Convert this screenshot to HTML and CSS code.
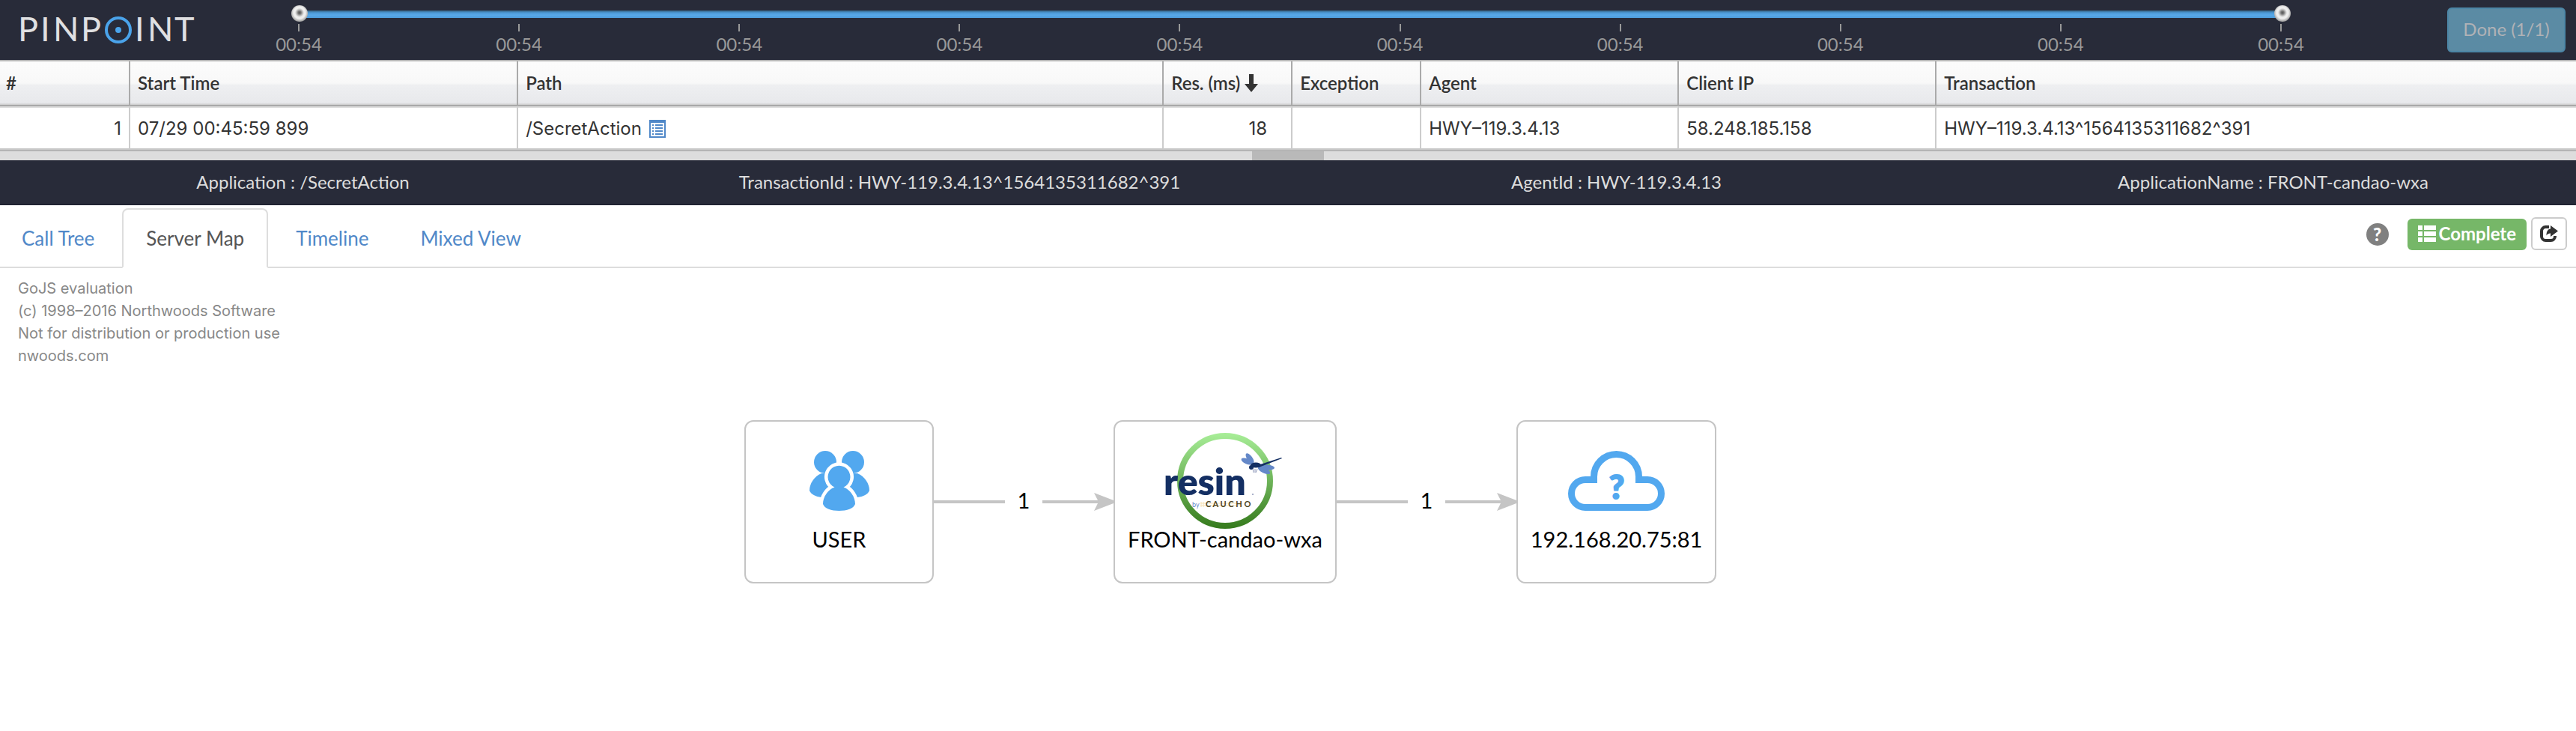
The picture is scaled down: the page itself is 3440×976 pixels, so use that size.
FILE: index.html
```html
<!DOCTYPE html>
<html lang="en">
<head>
<meta charset="utf-8">
<title>Pinpoint - Transaction</title>
<link rel="stylesheet" href="styles.css">
</head>
<body>
<header class="topbar">
  <svg class="brand" viewBox="20 8 244 60" role="img" aria-label="PINPOINT">
    <text class="brand-text" y="55" x="24 54 71 108">PINP</text>
    <circle class="brand-ring" cx="158" cy="40" r="16"/>
    <circle class="brand-dot" cx="158" cy="40" r="4"/>
    <text class="brand-text" y="55" x="180 197 233">INT</text>
  </svg>
  <div class="timeline">
    <div class="slider">
      <div class="slider-track"></div>
      <input class="slider-input" type="range" min="0" max="100" value="0" aria-label="Range start">
      <input class="slider-input" type="range" min="0" max="100" value="100" aria-label="Range end">
    </div>
    <ol class="ticks">
      <li class="tick">00:54</li>
      <li class="tick">00:54</li>
      <li class="tick">00:54</li>
      <li class="tick">00:54</li>
      <li class="tick">00:54</li>
      <li class="tick">00:54</li>
      <li class="tick">00:54</li>
      <li class="tick">00:54</li>
      <li class="tick">00:54</li>
      <li class="tick">00:54</li>
    </ol>
  </div>
  <button class="done" type="button" disabled>Done (1/1)</button>
</header>

<table class="grid">
  <colgroup>
    <col class="col-num"><col class="col-time"><col class="col-path"><col class="col-flag"><col class="col-flag"><col class="col-id"><col class="col-id"><col>
  </colgroup>
  <thead>
    <tr>
      <th scope="col">#</th>
      <th scope="col">Start Time</th>
      <th scope="col">Path</th>
      <th scope="col">Res. (ms)<svg class="sort" viewBox="0 0 18 24" aria-hidden="true"><path d="M6 0h6v13h6l-9 11L0 13h6z"/></svg></th>
      <th scope="col">Exception</th>
      <th scope="col">Agent</th>
      <th scope="col">Client IP</th>
      <th scope="col">Transaction</th>
    </tr>
  </thead>
  <tbody>
    <tr>
      <td class="right">1</td>
      <td>07/29 00:45:59 899</td>
      <td>/SecretAction<svg class="detail" viewBox="0 0 22 24" aria-hidden="true"><path fill-rule="evenodd" d="M0 0h22v24H0zM2 4v18h18V4z"/><path d="M4 6h2v2H4zm4 0h10v2H8zM4 10h2v2H4zm4 0h10v2H8zM4 14h2v2H4zm4 0h10v2H8zM4 18h2v2H4zm4 0h10v2H8z"/></svg></td>
      <td class="right res">18</td>
      <td></td>
      <td>HWY–119.3.4.13</td>
      <td>58.248.185.158</td>
      <td>HWY–119.3.4.13^1564135311682^391</td>
    </tr>
  </tbody>
</table>
<div class="splitter"><div class="splitter-grip"></div></div>

<section class="info">
  <ul class="info-list">
    <li>Application : /SecretAction</li>
    <li>TransactionId : HWY-119.3.4.13^1564135311682^391</li>
    <li>AgentId : HWY-119.3.4.13</li>
    <li>ApplicationName : FRONT-candao-wxa</li>
  </ul>
</section>

<nav class="tabbar">
  <ul class="tabs">
    <li><a class="tab" href="#calltree">Call Tree</a></li>
    <li><a class="tab active" href="#servermap" aria-current="page">Server Map</a></li>
    <li><a class="tab" href="#timeline">Timeline</a></li>
    <li><a class="tab" href="#mixed">Mixed View</a></li>
  </ul>
  <div class="tools">
    <button class="help" type="button">?</button>
    <button class="complete" type="button"><svg class="list" viewBox="0 0 24 22" aria-hidden="true"><path d="M0 0h6v6H0zm8 0h16v6H8zM0 8h6v6H0zm8 0h16v6H8zM0 16h6v6H0zm8 0h16v6H8z"/></svg>Complete</button>
    <button class="share" type="button" aria-label="Open in new window"><svg class="share-icon" viewBox="0 0 24 22" aria-hidden="true"><path class="share-frame" d="M12 2H7.500a5.500 5.500 0 0 0-5.500 5.500v7A5.500 5.500 0 0 0 7.500 20h7a5.500 5.500 0 0 0 5.500-5.500V14"/><path d="M14 0l10 7.500L14 15v-4.500c-2.500 0-4 .8-5.500 3C8.500 8 10.500 5 14 4.500z"/></svg></button>
  </div>
</nav>

<main class="canvas" id="servermap">
  <p class="watermark">GoJS evaluation<br>(c) 1998–2016 Northwoods Software<br>Not for distribution or production use<br>nwoods.com</p>
  <div class="map">
    <div class="node">
      <div class="node-art"><svg class="users" viewBox="0 0 80 80" aria-hidden="true">
        <g><circle cx="21" cy="15" r="15"/><path d="M16 30C6 34 0 44 0 53c2 5 8 8 16 9L30 50V30z"/></g>
        <g><circle cx="58" cy="15" r="15"/><path d="M64 30c10 4 16 14 16 23-2 5-8 8-16 9L50 50V30z"/></g>
        <path class="users-gap" d="M33.500 48.500a15 15 0 1 1 12 0C55 52 61 62 61 71c-2 6-11 9-21.500 9S20 77 18 71c0-9 6-19 15.500-22.500z"/>
        <path d="M33.500 48.500a15 15 0 1 1 12 0C55 52 61 62 61 71c-2 6-11 9-21.500 9S20 77 18 71c0-9 6-19 15.500-22.500z"/>
      </svg></div>
      <div class="node-label">USER</div>
    </div>
    <div class="link">
      <div class="link-line"></div><div class="link-count">1</div>
      <svg class="link-arrow" viewBox="0 0 95 24" aria-hidden="true"><path d="M0 10h74L69 0l26 10v4L69 24l5-10H0z"/></svg>
    </div>
    <div class="node">
      <div class="node-art"><svg class="resin" viewBox="0 8 172 128" role="img" aria-label="resin by Caucho">
        <defs><linearGradient id="ring" gradientUnits="userSpaceOnUse" x1="0" y1="8" x2="0" y2="136"><stop offset="0" stop-color="#a8ee98"/><stop offset="1" stop-color="#357a1c"/></linearGradient></defs>
        <circle cx="86" cy="72" r="60" fill="none" stroke="url(#ring)" stroke-width="8"/>
        <g fill="#6488c8">
          <ellipse cx="119" cy="42" rx="8" ry="3.500" transform="rotate(54 119 42)"/>
          <ellipse cx="115" cy="46" rx="8" ry="3.500" transform="rotate(24 115 46)"/>
          <ellipse cx="142" cy="54" rx="10" ry="3.500" transform="rotate(4 142 54)"/>
          <ellipse cx="138" cy="58" rx="9" ry="3.500" transform="rotate(26 138 58)"/>
        </g>
        <g fill="#142f63">
          <ellipse cx="127" cy="51" rx="7" ry="3.500"/>
          <circle cx="121" cy="54" r="3"/>
          <path d="M130 51l31-10 1 1-31 12z"/>
        </g>
        <path d="M123 56l1 5M126 56l0 5M129 56l-2 5" stroke="#8d97b8" fill="none"/>
        <text class="resin-word" x="4" y="91">resin</text>
        <circle cx="123" cy="90" r="1" fill="#8d97b8"/>
        <path d="M53 102h56M53 105h56M54 100v7M57 100v7" stroke="#f8e2b4" fill="none"/>
        <text class="resin-by" x="42" y="107">by</text>
        <text class="resin-caucho" x="60" y="107">C A U C H O</text>
      </svg></div>
      <div class="node-label">FRONT-candao-wxa</div>
    </div>
    <div class="link">
      <div class="link-line"></div><div class="link-count">1</div>
      <svg class="link-arrow" viewBox="0 0 95 24" aria-hidden="true"><path d="M0 10h74L69 0l26 10v4L69 24l5-10H0z"/></svg>
    </div>
    <div class="node">
      <div class="node-art"><svg class="cloud" viewBox="0 0 129 80" aria-hidden="true">
        <path d="M23 75.500H106a18.500 18.500 0 0 0 0-37H94.500V34.500a30 30 0 0 0-60 0v4H23a18.500 18.500 0 0 0 0 37z"/>
        <text x="65" y="64" text-anchor="middle">?</text>
      </svg></div>
      <div class="node-label">192.168.20.75:81</div>
    </div>
  </div>
</main>
</body>
</html>
```
FILE: styles.css
```css
* { box-sizing: border-box; }

body {
  margin: 0;
  background: #fff;
  color: #333;
  font: 24px/28px Lato, "Liberation Sans", sans-serif;
}

ul, ol, p { margin: 0; padding: 0; list-style: none; }
button { font: inherit; margin: 0; }
svg { display: block; flex: none; }

/* Top bar */
.topbar {
  display: flex;
  align-items: flex-start;
  height: 80px;
  padding: 0 14px 0 20px;
  background: #282b39;
}
.brand { width: 244px; height: 60px; margin-top: 8px; }
.brand-text { font: 400 45px Lato, sans-serif; fill: #e0e0e2; }
.brand-ring { fill: none; stroke: #4aa3ea; stroke-width: 4px; }
.brand-dot { fill: #4aa3ea; }

.timeline { flex: 1; margin: 7px 191px 0 104px; }
.slider { display: grid; align-items: center; height: 22px; margin: 0 18px 0 21px; }
.slider > * { grid-area: 1 / 1; }
.slider-track {
  height: 10px;
  margin: 2px 11px 0;
  background: linear-gradient(#35607f, #4c98d5 30%, #58a9e9 60%, #4f9cda);
}
.slider-input {
  appearance: none;
  width: 100%;
  height: 22px;
  margin: 0;
  background: none;
  pointer-events: none;
}
.slider-input::-webkit-slider-thumb {
  appearance: none;
  width: 22px;
  height: 22px;
  border-radius: 50%;
  background: radial-gradient(circle at 50% 45%, #555 0, #777 2px, #bbb 4px, #eee 6px, #eee 8px, #999 12px);
  pointer-events: auto;
}
.ticks { display: flex; justify-content: space-between; margin-top: 3px; color: #999; }
.tick { width: 62px; text-align: center; }
.tick::before { content: ""; display: block; width: 2px; height: 10px; margin: 0 auto 3px; background: #999; }

.done {
  width: 158px;
  height: 60px;
  margin-top: 10px;
  padding: 0 0 2px;
  border: 2px solid #4c86a6;
  border-radius: 6px;
  background: #5b8ba4;
  color: #b0b2b6;
}

/* Transaction list */
.grid {
  width: 100%;
  table-layout: fixed;
  border-collapse: separate;
  border-spacing: 0;
  border-top: 2px solid #b4b4b4;
  border-bottom: 2px solid #b5b5b5;
}
.col-num { width: 5.06%; }
.col-time { width: 15.06%; }
.col-path { width: 25.06%; }
.col-flag { width: 5%; }
.col-id { width: 10%; }
.grid th, .grid td { padding: 0 10px; text-align: left; white-space: nowrap; vertical-align: middle; }
.grid th {
  height: 60px;
  border-right: 2px solid #aaa;
  border-bottom: 2px solid #a8a8a8;
  background: linear-gradient(#fcfcfc, #f8f8f8 50%, #eeeff1 55%, #e8e9ec 95%, #ccc);
  font-weight: 600;
}
.grid th:first-child { padding-left: 8px; }
.grid td {
  height: 58px;
  padding-top: 2px;
  border-top: 2px solid #ddd;
  border-right: 2px solid #ccc;
  border-bottom: 2px solid #c9c9c9;
  font-family: Inter, "Liberation Sans", sans-serif;
}
.grid th:last-child, .grid td:last-child { border-right: 0; }
.grid .right { text-align: right; }
.grid .res { padding-right: 32px; }
.sort { display: inline-block; width: 18px; height: 24px; margin-left: 6px; vertical-align: -3px; fill: #333; }
.detail { display: inline-block; width: 22px; height: 24px; margin-left: 10px; vertical-align: -4px; fill: #5088c8; }

.splitter { display: flex; justify-content: center; background: #ddd; }
.splitter-grip { width: 96px; height: 12px; background: #b9b9b9; }

/* Transaction info */
.info { overflow: hidden; background: #282b39; border-bottom: 2px solid #202332; color: #ddd; }
.info-list { display: grid; grid-template-columns: repeat(4, 1fr); margin: 0 -34px; }
.info-list li { line-height: 58px; text-align: center; white-space: nowrap; }

/* Tabs */
.tabbar { display: flex; justify-content: space-between; align-items: flex-end; height: 84px; border-bottom: 2px solid #ddd; }
.tabs { display: flex; gap: 5px; margin: 0 0 -2px -3px; }
.tab {
  display: block;
  height: 80px;
  padding: 0 30px;
  border: 2px solid transparent;
  border-radius: 8px 8px 0 0;
  color: #5088c8;
  font-size: 26px;
  line-height: 76px;
  text-decoration: none;
}
.tab.active { border-color: #ddd; border-bottom-color: #fff; background: #fff; color: #555; }
.tools { display: flex; align-items: flex-end; gap: 6px; padding: 0 12px 22px 0; }
.help {
  width: 30px;
  height: 30px;
  margin: 0 19px 6px 0;
  padding: 0;
  border: 0;
  border-radius: 50%;
  background: #808080;
  color: #fff;
  font-weight: 900;
  line-height: 30px;
}
.complete {
  display: flex;
  align-items: center;
  gap: 4px;
  height: 42px;
  padding: 0 14px 2px;
  border: 0;
  border-radius: 6px;
  background: #76b768;
  color: #fff;
  font-weight: 700;
}
.list { width: 24px; height: 22px; fill: #fff; }
.share {
  display: flex;
  align-items: center;
  justify-content: center;
  width: 48px;
  height: 44px;
  padding: 0;
  border: 2px solid #ccc;
  border-radius: 6px;
  background: #fff;
}
.share-icon { width: 24px; height: 22px; fill: #333; }
.share-frame { fill: none; stroke: #333; stroke-width: 4px; }

/* Server map */
.canvas { padding: 12px 24px; }
.watermark { color: #888; font: 400 20px/30px Inter, "Liberation Sans", sans-serif; }
.map { display: flex; align-items: center; margin: 71px 0 0 970px; }
.node {
  flex: none;
  min-width: 253px;
  height: 218px;
  padding: 15px 17px 0;
  border: 2px solid #c5c5c5;
  border-radius: 12px;
  background: #fff;
  color: #000;
  font-size: 29px;
  text-align: center;
}
.node-art { display: flex; align-items: center; justify-content: center; height: 128px; }
.users { width: 80px; height: 80px; fill: #52a8ef; }
.users-gap { stroke: #fff; stroke-width: 9px; }
.resin { width: 172px; height: 128px; }
.resin-word { font: 800 50px Lato, sans-serif; fill: #142f63; }
.resin-by { font: 400 9px Lato, sans-serif; fill: #6488c8; }
.resin-caucho { font: 700 11px Lato, sans-serif; fill: #4c4220; }
.cloud { width: 129px; height: 80px; fill: none; stroke: #52a8ef; stroke-width: 9px; }
.cloud text { font: 900 44px Lato, sans-serif; fill: #52a8ef; stroke-width: 2px; }

.link { display: flex; flex: none; align-items: center; width: 240px; }
.link-line { flex: 1; height: 4px; background: #c5c5c5; }
.link-count { width: 50px; padding-bottom: 5px; color: #000; font-size: 29px; text-align: center; }
.link-arrow { width: 95px; height: 24px; fill: #c5c5c5; }
```
